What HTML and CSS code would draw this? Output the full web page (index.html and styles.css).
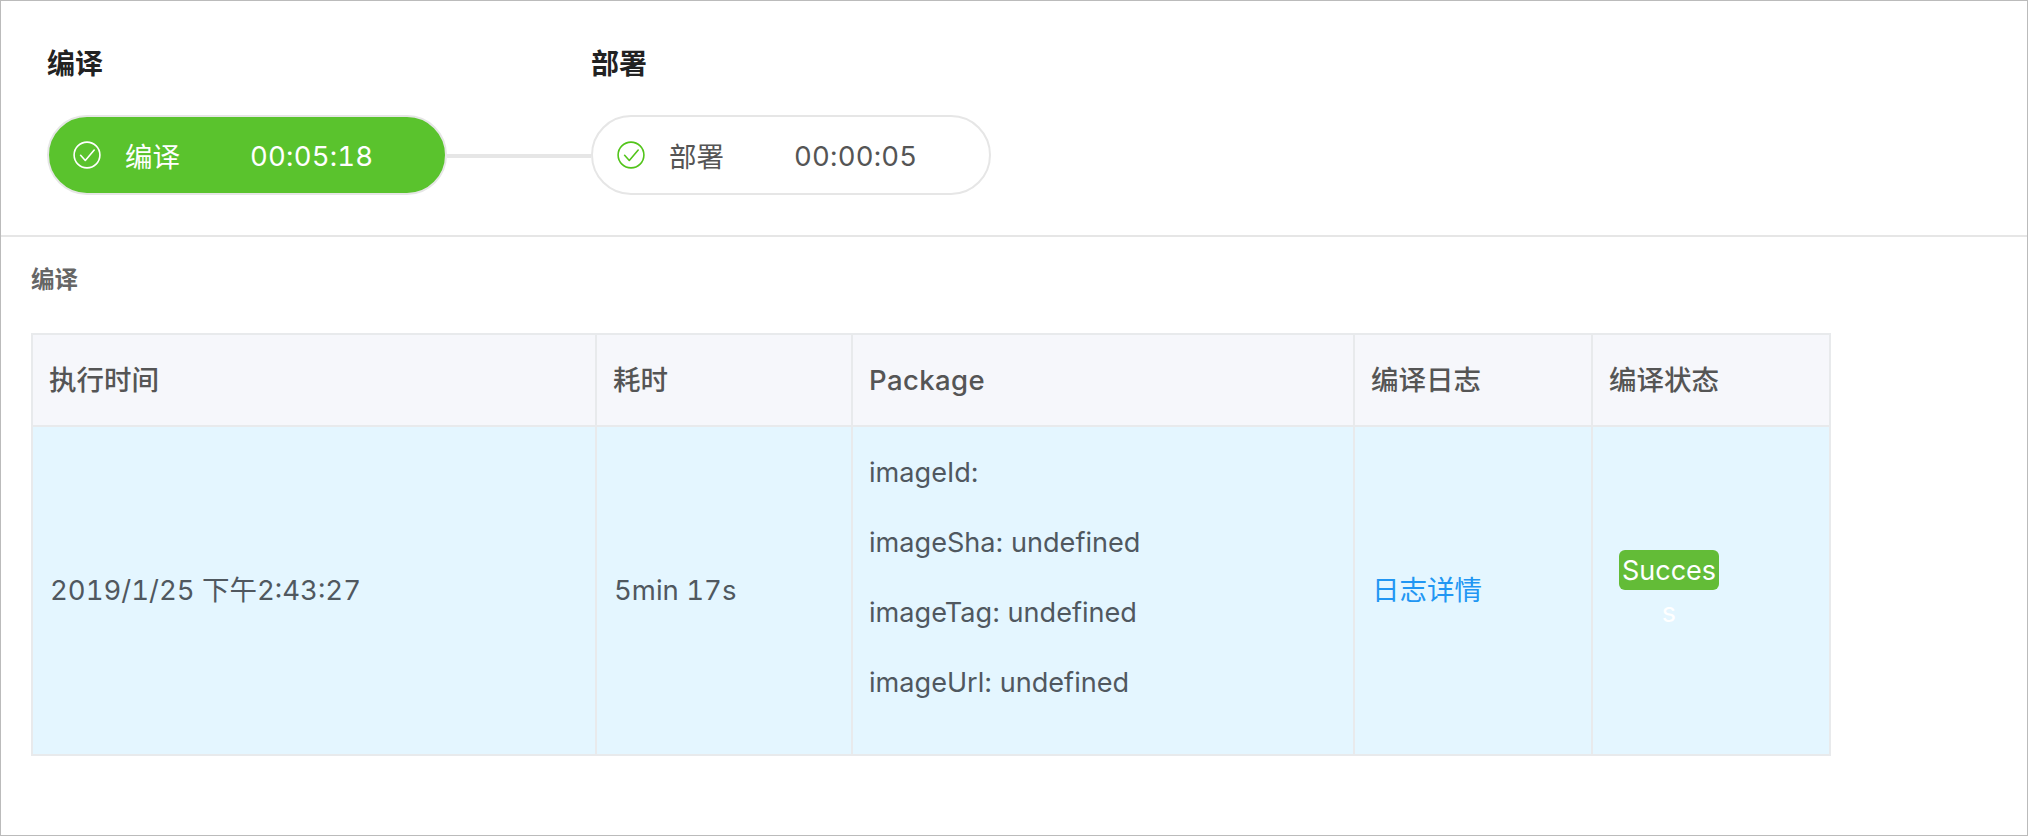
FILE: index.html
```html
<!DOCTYPE html>
<html lang="zh-CN">
<head>
<meta charset="utf-8">
<title>编译</title>
<link rel="stylesheet" href="styles.css">
</head>
<body>
<div class="page">
  <section class="pipeline">
    <div class="stage">
      <h3 class="stage-title">编译</h3>
      <div class="stage-row">
        <div class="pill pill-active">
          <svg class="pill-icon" viewBox="0 0 28 28" fill="none" stroke="currentColor" stroke-width="1.6"><circle cx="14" cy="14" r="12.9"/><path d="M7.6 14.3l4.7 5.2L21.2 9" stroke-linecap="round" stroke-linejoin="round"/></svg>
          <span class="pill-name">编译</span>
          <span class="pill-time">00:05:18</span>
        </div>
        <div class="connector"></div>
      </div>
    </div>
    <div class="stage">
      <h3 class="stage-title">部署</h3>
      <div class="stage-row">
        <div class="pill">
          <svg class="pill-icon pill-icon-ok" viewBox="0 0 28 28" fill="none" stroke="currentColor" stroke-width="1.6"><circle cx="14" cy="14" r="12.9"/><path d="M7.6 14.3l4.7 5.2L21.2 9" stroke-linecap="round" stroke-linejoin="round"/></svg>
          <span class="pill-name">部署</span>
          <span class="pill-time">00:00:05</span>
        </div>
      </div>
    </div>
  </section>
  <section class="detail">
    <h4 class="detail-title">编译</h4>
    <table class="build-table">
      <colgroup>
        <col class="col-time"><col class="col-cost"><col class="col-pkg"><col class="col-log"><col class="col-status">
      </colgroup>
      <thead>
        <tr><th>执行时间</th><th>耗时</th><th class="th-latin">Package</th><th>编译日志</th><th>编译状态</th></tr>
      </thead>
      <tbody>
        <tr>
          <td class="spaced">2019/1/25 下午2:43:27</td>
          <td class="spaced">5min 17s</td>
          <td class="pkg">
            <p>imageId:</p>
            <p>imageSha: undefined</p>
            <p>imageTag: undefined</p>
            <p>imageUrl: undefined</p>
          </td>
          <td class="log"><a class="log-link" href="#">日志详情</a></td>
          <td class="status"><span class="tag">Success</span></td>
        </tr>
      </tbody>
    </table>
  </section>
</div>
</body>
</html>
```

FILE: styles.css
```css
* { box-sizing: border-box; }
html, body { margin: 0; padding: 0; background: #fff; }
body {
  font-family: Inter, "Noto Sans CJK SC", sans-serif;
  color: #555;
}
.page {
  height: 836px;
  border: 1px solid #bbb;
  overflow: hidden;
}
.pipeline {
  display: flex;
  height: 236px;
  padding: 45px 0 0 46px;
  border-bottom: 2px solid #e6e6e6;
}
.stage { width: 544px; }
.stage-title {
  margin: 0 0 32px;
  font-size: 28px;
  line-height: 37px;
  font-weight: 700;
  color: #222;
}
.stage-row { display: flex; align-items: center; }
.pill {
  display: flex;
  align-items: center;
  flex: none;
  width: 400px;
  height: 80px;
  padding-left: 24px;
  border: 2px solid #e6e6e6;
  border-radius: 40px;
  font-size: 27.5px;
  background: #fff;
}
.pill-active { background: #5ac32d; color: #fff; }
.pill-icon { width: 28px; height: 28px; flex: none; margin-right: 24px; }
.pill-icon-ok { color: #52c41a; }
.pill-name { width: 125px; flex: none; }
.pill-time { padding-top: 2px; font-variant-numeric: tabular-nums; letter-spacing: 0.2px; }
.connector { flex: 1; height: 4px; background: #e6e6e6; margin-top: 2px; }
.detail { padding: 30px 0 0 30px; }
.detail-title {
  margin: 0 0 40px;
  font-size: 23.5px;
  line-height: 26px;
  font-weight: 700;
  color: #666;
}
.build-table {
  width: 1800px;
  table-layout: fixed;
  border-collapse: separate;
  border-spacing: 0;
  border-top: 2px solid #e8eaec;
  border-left: 2px solid #e8eaec;
  font-size: 27.5px;
  line-height: 38px;
}
.col-time { width: 564px; }
.col-cost { width: 256px; }
.col-pkg { width: 502px; }
.col-log { width: 238px; }
.col-status { width: 238px; }
.build-table th, .build-table td {
  padding: 0 16px;
  border-right: 2px solid #e8eaec;
  border-bottom: 2px solid #e8eaec;
  text-align: left;
  vertical-align: middle;
}
.build-table th {
  height: 92px;
  font-weight: 500;
  background: #f6f7fb;
  color: #555;
}
.build-table .th-latin { letter-spacing: 0.4px; }
.build-table td {
  height: 329px;
  padding-bottom: 1px;
  background: #e4f6ff;
  color: #50585f;
}
.build-table .spaced { padding-left: 17px; font-variant-numeric: tabular-nums; }
.build-table .pkg { padding-bottom: 26px; font-size: 27.1px; }
.pkg p { margin: 0; line-height: 70px; }
.build-table .log { padding-left: 17px; }
.log-link { color: #2196f3; text-decoration: none; }
.build-table .status { padding-bottom: 42px; }
.tag {
  display: inline-block;
  width: 100px;
  height: 40px;
  margin: 0 0 0 10px;
  border-radius: 6px;
  background: #63bc37;
  color: #fff;
  font-size: 27px;
  line-height: 42px;
  text-align: center;
  word-break: break-all;
  vertical-align: middle;
}
```
